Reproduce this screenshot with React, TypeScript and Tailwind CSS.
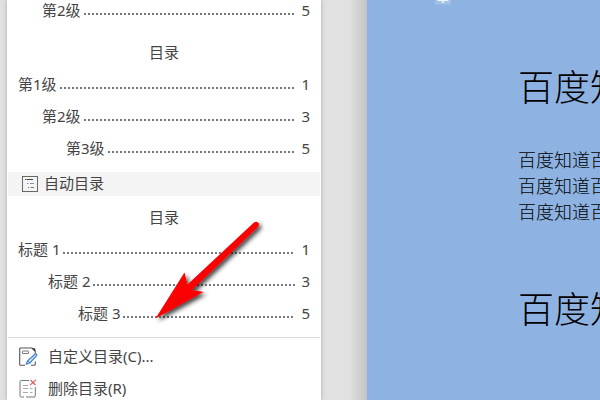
type TocEntry = {
  label: string;
  page: number;
  level: number;
};

const manualEntries: TocEntry[] = [
  { label: "第1级", page: 1, level: 0 },
  { label: "第2级", page: 3, level: 1 },
  { label: "第3级", page: 5, level: 2 },
];

const autoEntries: TocEntry[] = [
  { label: "标题 1", page: 1, level: 0 },
  { label: "标题 2", page: 3, level: 1 },
  { label: "标题 3", page: 5, level: 2 },
];

const manualIndent = ["pl-0", "pl-6", "pl-12"];
const autoIndent = ["pl-0", "pl-[30px]", "pl-[60px]"];

const TocLine = ({ label, page }: { label: string; page: number }) => (
  <>
    <span>{label}</span>
    <span className="mt-2 ml-[3px] h-[2px] flex-1 bg-[repeating-linear-gradient(to_right,#777_0px_2px,transparent_2px_4px)]" />
    <span className="w-[15px] text-right">{page}</span>
  </>
);

type TocPreviewProps = {
  entries: TocEntry[];
  indent: string[];
};

const TocPreview = ({ entries, indent }: TocPreviewProps) => (
  <div className="pr-[11px] pl-[11px]">
    <h3 className="flex h-[33px] items-center justify-center">目录</h3>
    <ul>
      {entries.map((entry) => (
        <li
          key={entry.label}
          className={`flex h-8 items-center ${indent[entry.level]}`}
        >
          <TocLine label={entry.label} page={entry.page} />
        </li>
      ))}
    </ul>
  </div>
);

const OutlineIcon = () => (
  <svg
    className="relative top-px"
    width="16"
    height="16"
    viewBox="0 0 16 16"
    fill="none"
  >
    <rect x="0.5" y="0.5" width="15" height="15" stroke="#666" />
    <path d="M3 3.500h1.500M5 3.500h6" stroke="#444" strokeWidth="1.200" />
    <path d="M5 7.500h1.500M8 7.500h4" stroke="#7d93b5" />
    <path d="M6 11.500h1M8.500 11.500h3.500" stroke="#777" />
  </svg>
);

const EditIcon = () => (
  <svg width="19" height="19" viewBox="0 0 19 19" fill="none">
    <path
      d="M6 18.200H1.500a.8.8 0 0 1-.8-.8V1.800A.8.8 0 0 1 1.500 1H13l3.300 3.300V7M16.300 14.500v2.900a.8.8 0 0 1-.8.8H12"
      stroke="#555"
      strokeWidth="1.100"
    />
    <path d="M12.500 1l3.800 3.800V1.500z" fill="#333" />
    <rect x="3.500" y="4" width="6" height="2.500" rx=".5" stroke="#777" />
    <path
      d="M16.100 7.200c.9-.8 2.300.6 1.500 1.500l-6.800 7.300-3.700 1.200 1.600-3.500z"
      fill="#dcebfb"
      stroke="#3f83cf"
      strokeWidth="1.200"
      strokeLinejoin="round"
    />
    <path d="M8.700 13.700l2.100 2.300" stroke="#3f83cf" />
  </svg>
);

const DeleteIcon = () => (
  <svg width="19" height="19" viewBox="0 0 19 19" fill="none">
    <path
      d="M10 1.500H2.200A1.200 1.200 0 0 0 1 2.700v14.100A1.200 1.200 0 0 0 2.200 18H5M7 18h8.300a1 1 0 0 0 1-1V8"
      stroke="#777"
    />
    <path
      d="M4 6.500h5M4 9.500h5M4 13.500h5M11 9.500h2.500M11 13.500h2.500"
      stroke="#aaa"
    />
    <path d="M11.500 1l5 5M17 .8l-6 5.400" stroke="#cf5b53" strokeWidth="1.100" />
  </svg>
);

const PointerArrow = () => (
  <svg
    className="pointer-events-none absolute top-[212px] left-[143px]"
    width="130"
    height="120"
    viewBox="150 212 130 120"
    aria-hidden="true"
  >
    <defs>
      <filter id="arrow-shadow" x="-20%" y="-20%" width="150%" height="150%">
        <feDropShadow
          dx="2.500"
          dy="2.500"
          stdDeviation="2"
          floodColor="#000"
          floodOpacity="0.75"
        />
      </filter>
    </defs>
    <path
      d="M155.500 318.500L184.500 272.500L187.500 284.500L254 222.500Q257 220.500 258.700 223.200Q259.500 225.500 257.500 227.500L192 290L203.500 292Z"
      fill="#fb0000"
      filter="url(#arrow-shadow)"
    />
  </svg>
);

const TocMenu = () => (
  <aside className="relative w-[314px] shrink-0 bg-white text-[15px] leading-5 text-[#444] shadow-[0_0_4px_rgba(0,0,0,0.25)]">
    <div className="flex h-5 items-center pr-[11px] pl-[35px]">
      <TocLine label="第2级" page={5} />
    </div>

    <div className="pt-[15px] pb-2">
      <TocPreview entries={manualEntries} indent={manualIndent} />
    </div>

    <h2 className="mx-px flex h-6 items-center gap-[6px] bg-[#f4f4f4] pb-[2px] pl-[14px]">
      <OutlineIcon />
      自动目录
    </h2>

    <div className="pt-1 pb-2">
      <TocPreview entries={autoEntries} indent={autoIndent} />
    </div>

    <div className="mx-px border-t border-[#dadada] pt-[2px]">
      <button
        type="button"
        className="flex h-8 w-full items-center gap-[10px] pl-[11px] text-left"
      >
        <EditIcon />
        自定义目录(C)...
      </button>
      <button
        type="button"
        className="flex h-8 w-full items-center gap-[10px] pl-[11px] text-left"
      >
        <DeleteIcon />
        删除目录(R)
      </button>
    </div>

    <PointerArrow />
  </aside>
);

const title = "百度知道";
const paragraph = "百度知道百度知道";

const DocumentPage = () => (
  <main className="relative min-w-0 flex-1 overflow-hidden bg-[#8eb3e2] pt-[62px] pl-[151px] whitespace-nowrap text-black">
    <svg
      className="absolute top-0 left-[68px]"
      width="16"
      height="5"
      viewBox="0 0 16 5"
    >
      <path d="M0 0h16v3.500q0 1-1 1H1q-1 0-1-1z" fill="#a3c0e6" />
      <path d="M2.500 .5h11M8 0v3M6.500 2h3" stroke="#eef4fc" />
    </svg>
    <h1 className="text-[36px] leading-[52px] font-light">{title}</h1>
    <div className="pt-[33px] pb-[59px] text-[18px] leading-[26px] font-light">
      <p>{paragraph}</p>
      <p>{paragraph}</p>
      <p>{paragraph}</p>
    </div>
    <h1 className="text-[36px] leading-[52px] font-light">{title}</h1>
  </main>
);

const App = () => {
  return (
    <div className="flex h-screen overflow-hidden bg-[#e1e1e1] pl-[7px] font-['Noto_Sans','Noto_Sans_CJK_SC',sans-serif]">
      <TocMenu />
      <div className="w-[46px] shrink-0 bg-[linear-gradient(to_right,transparent_60%,#c2c4c4)]" />
      <DocumentPage />
    </div>
  );
};

export default App;
